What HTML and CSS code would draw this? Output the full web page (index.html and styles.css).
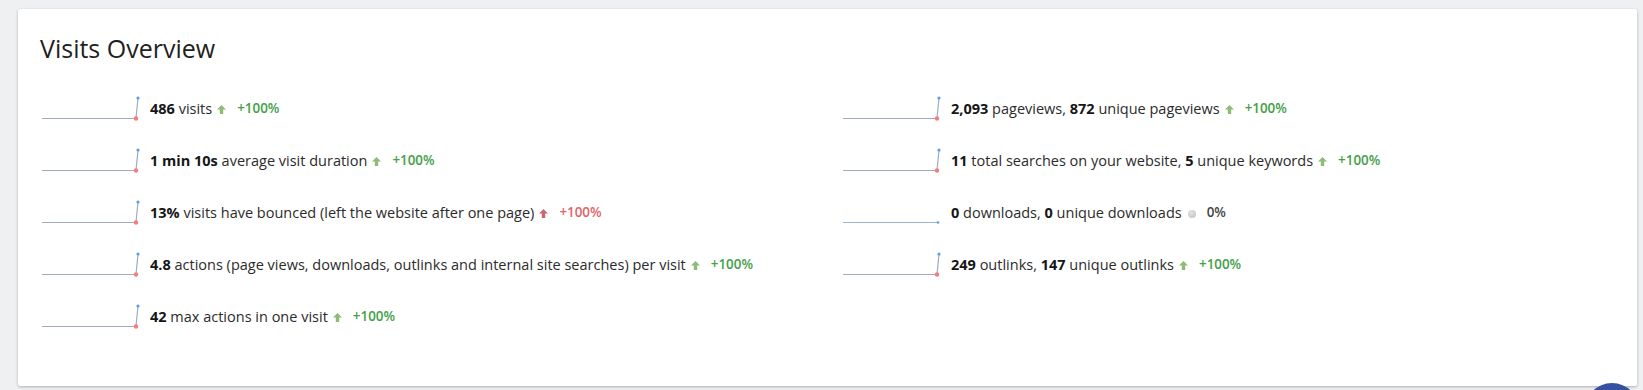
FILE: index.html
```html
<html>
    <head>
        <title>Visits Overview</title>
        <link rel="stylesheet" href="styles.css">
    </head>
    <body>

        <div class="card">
            <h2 class="card-title">Visits Overview</h2>

            <div class="overview">
                <div class="column">
                    <div class="metric">
                        <svg class="spark" width="100" height="25" viewBox="0 0 100 25">
                            <path d="M2 22.5 H96 L98 2" class="spark-line"/>
                            <circle cx="96" cy="22.5" r="2.2" class="spark-min"/>
                            <circle cx="98" cy="2" r="1.6" class="spark-max"/>
                        </svg>
                        <div class="metric-text"><b>486</b> visits</div>
                        <svg class="trend-icon" viewBox="0 0 9 9"><polygon class="up" points="4.5,0 9,4.6 6.2,4.6 6.2,9 2.8,9 2.8,4.6 0,4.6"/></svg>
                        <span class="trend good">+100%</span>
                    </div>

                    <div class="metric">
                        <svg class="spark" width="100" height="25" viewBox="0 0 100 25">
                            <path d="M2 22.5 H96 L98 2" class="spark-line"/>
                            <circle cx="96" cy="22.5" r="2.2" class="spark-min"/>
                            <circle cx="98" cy="2" r="1.6" class="spark-max"/>
                        </svg>
                        <div class="metric-text"><b>1 min 10s</b> average visit duration</div>
                        <svg class="trend-icon" viewBox="0 0 9 9"><polygon class="up" points="4.5,0 9,4.6 6.2,4.6 6.2,9 2.8,9 2.8,4.6 0,4.6"/></svg>
                        <span class="trend good">+100%</span>
                    </div>

                    <div class="metric">
                        <svg class="spark" width="100" height="25" viewBox="0 0 100 25">
                            <path d="M2 22.5 H96 L98 2" class="spark-line"/>
                            <circle cx="96" cy="22.5" r="2.2" class="spark-min"/>
                            <circle cx="98" cy="2" r="1.6" class="spark-max"/>
                        </svg>
                        <div class="metric-text"><b>13%</b> visits have bounced (left the website after one page)</div>
                        <svg class="trend-icon" viewBox="0 0 9 9"><polygon class="up-bad" points="4.5,0 9,4.6 6.2,4.6 6.2,9 2.8,9 2.8,4.6 0,4.6"/></svg>
                        <span class="trend bad">+100%</span>
                    </div>

                    <div class="metric">
                        <svg class="spark" width="100" height="25" viewBox="0 0 100 25">
                            <path d="M2 22.5 H96 L98 2" class="spark-line"/>
                            <circle cx="96" cy="22.5" r="2.2" class="spark-min"/>
                            <circle cx="98" cy="2" r="1.6" class="spark-max"/>
                        </svg>
                        <div class="metric-text"><b>4.8</b> actions (page views, downloads, outlinks and internal site searches) per visit</div>
                        <svg class="trend-icon" viewBox="0 0 9 9"><polygon class="up" points="4.5,0 9,4.6 6.2,4.6 6.2,9 2.8,9 2.8,4.6 0,4.6"/></svg>
                        <span class="trend good">+100%</span>
                    </div>

                    <div class="metric">
                        <svg class="spark" width="100" height="25" viewBox="0 0 100 25">
                            <path d="M2 22.5 H96 L98 2" class="spark-line"/>
                            <circle cx="96" cy="22.5" r="2.2" class="spark-min"/>
                            <circle cx="98" cy="2" r="1.6" class="spark-max"/>
                        </svg>
                        <div class="metric-text"><b>42</b> max actions in one visit</div>
                        <svg class="trend-icon" viewBox="0 0 9 9"><polygon class="up" points="4.5,0 9,4.6 6.2,4.6 6.2,9 2.8,9 2.8,4.6 0,4.6"/></svg>
                        <span class="trend good">+100%</span>
                    </div>
                </div>

                <div class="column">
                    <div class="metric">
                        <svg class="spark" width="100" height="25" viewBox="0 0 100 25">
                            <path d="M2 22.5 H96 L98 2" class="spark-line"/>
                            <circle cx="96" cy="22.5" r="2.2" class="spark-min"/>
                            <circle cx="98" cy="2" r="1.6" class="spark-max"/>
                        </svg>
                        <div class="metric-text"><b>2,093</b> pageviews, <b>872</b> unique pageviews</div>
                        <svg class="trend-icon" viewBox="0 0 9 9"><polygon class="up" points="4.5,0 9,4.6 6.2,4.6 6.2,9 2.8,9 2.8,4.6 0,4.6"/></svg>
                        <span class="trend good">+100%</span>
                    </div>

                    <div class="metric">
                        <svg class="spark" width="100" height="25" viewBox="0 0 100 25">
                            <path d="M2 22.5 H96 L98 2" class="spark-line"/>
                            <circle cx="96" cy="22.5" r="2.2" class="spark-min"/>
                            <circle cx="98" cy="2" r="1.6" class="spark-max"/>
                        </svg>
                        <div class="metric-text"><b>11</b> total searches on your website, <b>5</b> unique keywords</div>
                        <svg class="trend-icon" viewBox="0 0 9 9"><polygon class="up" points="4.5,0 9,4.6 6.2,4.6 6.2,9 2.8,9 2.8,4.6 0,4.6"/></svg>
                        <span class="trend good">+100%</span>
                    </div>

                    <div class="metric">
                        <svg class="spark" width="100" height="25" viewBox="0 0 100 25">
                            <path d="M2 22.5 H97" class="spark-flat"/>
                            <circle cx="97" cy="22.5" r="1.3" class="spark-max"/>
                        </svg>
                        <div class="metric-text"><b>0</b> downloads, <b>0</b> unique downloads</div>
                        <span class="trend-dot"></span>
                        <span class="trend neutral">0%</span>
                    </div>

                    <div class="metric">
                        <svg class="spark" width="100" height="25" viewBox="0 0 100 25">
                            <path d="M2 22.5 H96 L98 2" class="spark-line"/>
                            <circle cx="96" cy="22.5" r="2.2" class="spark-min"/>
                            <circle cx="98" cy="2" r="1.6" class="spark-max"/>
                        </svg>
                        <div class="metric-text"><b>249</b> outlinks, <b>147</b> unique outlinks</div>
                        <svg class="trend-icon" viewBox="0 0 9 9"><polygon class="up" points="4.5,0 9,4.6 6.2,4.6 6.2,9 2.8,9 2.8,4.6 0,4.6"/></svg>
                        <span class="trend good">+100%</span>
                    </div>
                </div>
            </div>
        </div>

        <div class="fab"></div>
    </body>
</html>
```

FILE: styles.css
```css
body {
    font-family: "Open Sans", "Noto Sans", sans-serif;
    background-color: #eef0f2;
    color: #2b2b2b;
    margin: 0;
    padding: 9px 6px 0 18px;
    height: 390px;
    box-sizing: border-box;
    overflow: hidden;
}

.card {
    background-color: #fff;
    width: 1619px;
    height: 377px;
    box-sizing: border-box;
    padding: 24px 22px 0 22px;
    border-radius: 2px;
    box-shadow: 0 1px 3px rgba(0, 0, 0, 0.28);
}

.card-title {
    font-size: 25px;
    font-weight: normal;
    line-height: 30px;
    color: #1f1f1f;
    margin: 0 0 19px 0;
}

.overview {
    display: grid;
    grid-template-columns: 801px 1fr;
}

.metric {
    display: flex;
    align-items: center;
    height: 52px;
    font-size: 14.5px;
}

.spark {
    flex-shrink: 0;
    margin-right: 10px;
}

.spark-line {
    fill: none;
    stroke: #a0abbd;
    stroke-width: 1.2;
}

.spark-flat {
    fill: none;
    stroke: #9db7d6;
    stroke-width: 1.2;
}

.spark-min {
    fill: #f47d7d;
}

.spark-max {
    fill: #5c9df0;
}

.metric-text b {
    color: #161616;
    font-weight: bold;
}

.trend-icon {
    width: 9px;
    height: 9px;
    margin: 3px 11px 0 5px;
}

.up {
    fill: #8fbb77;
}

.up-bad {
    fill: #c9686d;
}

.trend-dot {
    width: 8px;
    height: 8px;
    border-radius: 50%;
    background: radial-gradient(circle at 40% 35%, #e4e4e4, #bdbdbd);
    margin: 3px 11px 0 6px;
}

.trend {
    font-size: 13.4px;
    font-weight: 600;
}

.good {
    color: #43a047;
}

.bad {
    color: #e0636b;
}

.neutral {
    color: #444;
}

.fab {
    position: fixed;
    right: 3px;
    bottom: -49px;
    width: 56px;
    height: 56px;
    border-radius: 50%;
    background-color: #3650a2;
}
```
